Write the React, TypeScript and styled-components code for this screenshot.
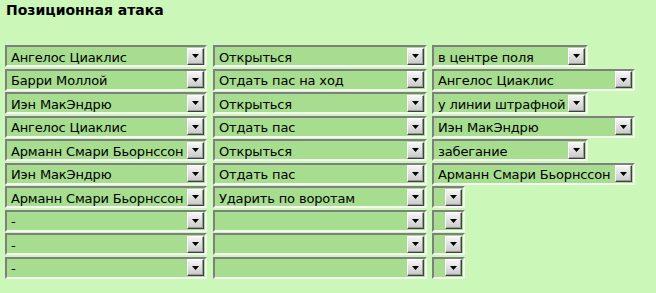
import React from "react";
import styled, { createGlobalStyle } from "styled-components";

const Global = createGlobalStyle`
  html, body { margin: 0; padding: 0; background: #cbf7b8; }
  body { font-family: "DejaVu Sans", Verdana, sans-serif; color: #000; }
`;

const Page = styled.div`
  padding: 2px 5px 0 5px;
  width: 656px;
  height: 293px;
  box-sizing: border-box;
`;

const Title = styled.h1`
  margin: 0 0 0 1px;
  font-size: 14px;
  font-weight: bold;
  line-height: 16px;
`;

const Rows = styled.div`
  margin-top: 27px;
  display: flex;
  flex-direction: column;
  gap: 1.5px;
`;

const Row = styled.div`
  display: flex;
  align-items: flex-start;
`;

const Cell = styled.div<{ $gap: number }>`
  margin-right: ${(p) => p.$gap}px;
  display: flex;
`;

const Box = styled.div<{ $w: number }>`
  width: ${(p) => p.$w}px;
  height: 22px;
  box-sizing: border-box;
  background: #a6dd8f;
  border-top: 2px solid #7f7f7f;
  border-left: 2px solid #7f7f7f;
  border-right: 2px solid #f4f9f1;
  border-bottom: 2px solid #f4f9f1;
  display: flex;
  align-items: center;
  padding-left: 4px;
  padding-right: 1px;
  font-size: 13px;
  letter-spacing: -0.15px;
  white-space: nowrap;
  overflow: hidden;
`;

const Label = styled.span`
  flex: 1;
  overflow: hidden;
  line-height: 16px;
  padding-top: 3px;
`;

const Arrow = styled.span`
  flex: none;
  width: 17px;
  height: 17px;
  box-sizing: border-box;
  background: linear-gradient(#f6f6f6, #c9c9c9);
  border-top: 1px solid #ffffff;
  border-left: 1px solid #ffffff;
  border-right: 1px solid #404040;
  border-bottom: 1px solid #404040;
  box-shadow: inset -1px -1px 0 #9a9a9a;
  display: flex;
  align-items: center;
  justify-content: center;
`;

const Dd: React.FC<{ w: number; text: string }> = ({ w, text }) => (
  <Box $w={w}>
    <Label>{text}</Label>
    <Arrow>
      <svg width="7" height="4" viewBox="0 0 7 4">
        <path d="M0 0H7L3.5 4Z" fill="#000" />
      </svg>
    </Arrow>
  </Box>
);

const data: [string, string, string, number][] = [
  ["Ангелос Циаклис", "Открыться", "в центре поля", 156],
  ["Барри Моллой", "Отдать пас на ход", "Ангелос Циаклис", 203],
  ["Иэн МакЭндрю", "Открыться", "у линии штрафной", 156],
  ["Ангелос Циаклис", "Отдать пас", "Иэн МакЭндрю", 203],
  ["Арманн Смари Бьорнссон", "Открыться", "забегание", 156],
  ["Иэн МакЭндрю", "Отдать пас", "Арманн Смари Бьорнссон", 203],
  ["Арманн Смари Бьорнссон", "Ударить по воротам", "", 33],
  ["-", "", "", 33],
  ["-", "", "", 33],
  ["-", "", "", 33],
];

export default function App() {
  return (
    <Page>
      <Global />
      <Title>Позиционная атака</Title>
      <Rows>
        {data.map(([a, b, c, w], i) => (
          <Row key={i}>
            <Cell $gap={6}>
              <Dd w={202} text={a} />
            </Cell>
            <Cell $gap={5}>
              <Dd w={214} text={b} />
            </Cell>
            <Cell $gap={0}>
              <Dd w={w} text={c} />
            </Cell>
          </Row>
        ))}
      </Rows>
    </Page>
  );
}
